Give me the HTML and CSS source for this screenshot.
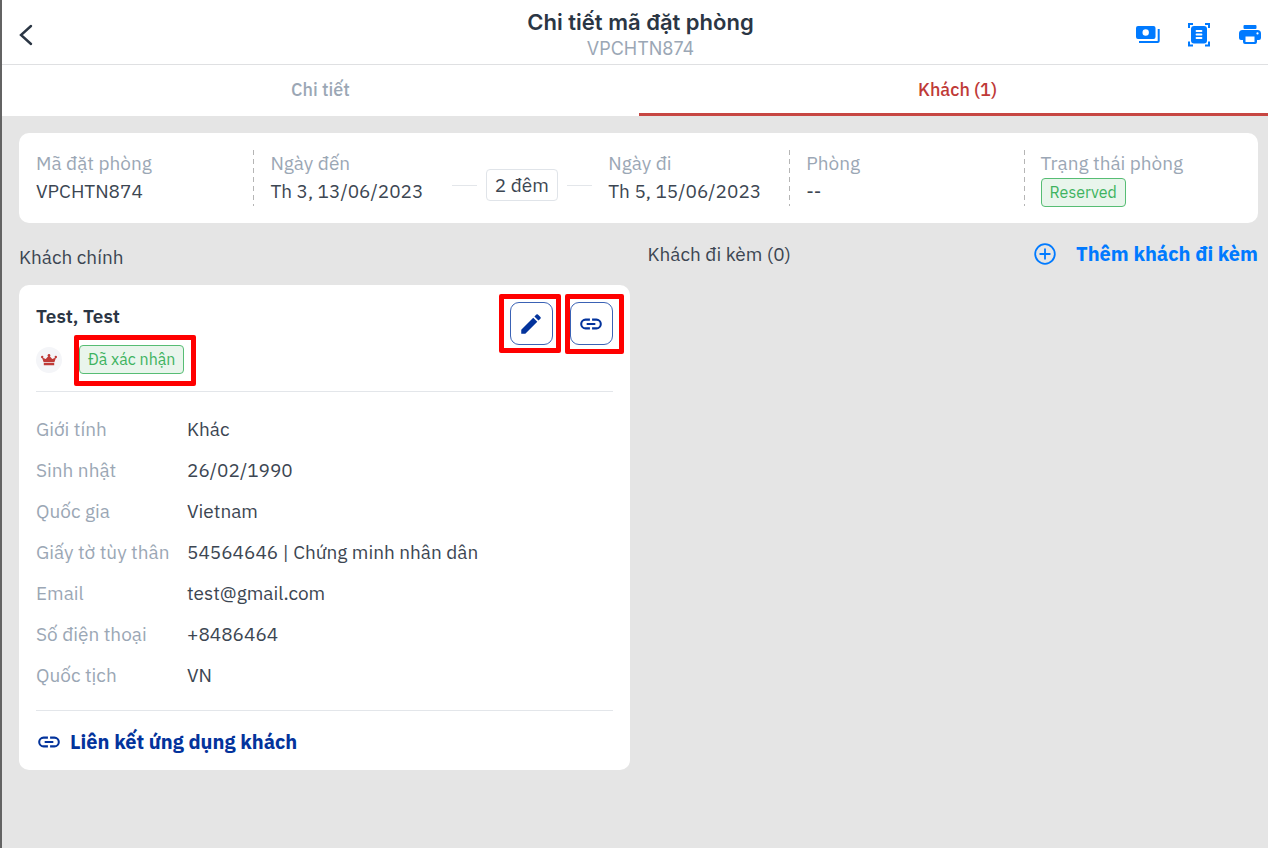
FILE: index.html
```
<!DOCTYPE html>
<html lang="vi">
<head>
    <meta charset="UTF-8">
    <meta name="viewport" content="width=device-width, initial-scale=1.0">
    <title>Chi tiết mã đặt phòng</title>
    <link rel="stylesheet" href="styles.css">
</head>
<body>
    <!-- Header -->
    <header class="header">
        <button class="icon-button back" aria-label="Quay lại">
            <svg width="14" height="22" viewBox="0 0 14 22"><path d="M12 2L2 11l10 9" fill="none" stroke="currentColor" stroke-width="2.4" stroke-linecap="round"/></svg>
        </button>
        <div class="title">
            <h1>Chi tiết mã đặt phòng</h1>
            <p>VPCHTN874</p>
        </div>
        <div class="header-actions">
            <button class="icon-button" aria-label="Thanh toán">
                <svg width="24" height="24" viewBox="0 0 24 24" fill="currentColor">
                    <path fill-rule="evenodd" d="M2 3h15.500a2 2 0 0 1 2 2v9a2 2 0 0 1-2 2H2a2 2 0 0 1-2-2V5a2 2 0 0 1 2-2zM9.700 6.300a3.200 3.200 0 1 0 0 6.400a3.200 3.200 0 0 0 0-6.400z"/>
                    <path d="M21.700 6h2v12a2 2 0 0 1-2 2H3v-1.900h18.200a.5.5 0 0 0 .5-.5z"/>
                </svg>
            </button>
            <button class="icon-button" aria-label="Quét giấy tờ">
                <svg width="24" height="24" viewBox="0 0 24 24" fill="none">
                    <path d="M2 5V1h4M18 1h4v4M22 18.500v4h-4M6 22.500H2v-4" stroke="currentColor" stroke-width="2"/>
                    <rect x="4" y="3" width="16" height="17.500" rx="3" fill="currentColor"/>
                    <path d="M9.500 8h5M9.500 11.500h5M9.500 15h5" stroke="#fff" stroke-width="1.800" stroke-linecap="round"/>
                </svg>
            </button>
            <button class="icon-button" aria-label="In">
                <svg width="24" height="24" viewBox="0 0 24 24" fill="currentColor">
                    <rect x="5.500" y="2" width="13" height="4" rx="1"/>
                    <path fill-rule="evenodd" d="M4.500 7h15a3.500 3.500 0 0 1 3.500 3.500V15a2 2 0 0 1-2 2h-2v2a2 2 0 0 1-2 2H7a2 2 0 0 1-2-2v-2H3a2 2 0 0 1-2-2v-4.500A3.500 3.500 0 0 1 4.500 7zM7.500 13.500V19h9v-5.500zM19.500 9.300a1.100 1.100 0 1 0 0 2.200a1.100 1.100 0 0 0 0-2.200z"/>
                </svg>
            </button>
        </div>
    </header>

    <nav class="tabs">
        <a href="#detail">Chi tiết</a>
        <a href="#guests" class="active">Khách (1)</a>
    </nav>

    <main class="content">
        <!-- Booking summary -->
        <section class="card summary">
            <div class="cell">
                <div class="label">Mã đặt phòng</div>
                <div>VPCHTN874</div>
            </div>
            <div class="cell dates">
                <div>
                    <div class="label">Ngày đến</div>
                    <div>Th 3, 13/06/2023</div>
                </div>
                <div class="nights"><span>2 đêm</span></div>
                <div>
                    <div class="label">Ngày đi</div>
                    <div>Th 5, 15/06/2023</div>
                </div>
            </div>
            <div class="cell">
                <div class="label">Phòng</div>
                <div>--</div>
            </div>
            <div class="cell">
                <div class="label">Trạng thái phòng</div>
                <span class="badge">Reserved</span>
            </div>
        </section>

        <div class="columns">
            <!-- Main guest -->
            <section>
                <h2 class="main-heading">Khách chính</h2>
                <div class="card guest">
                    <div class="guest-header">
                        <div>
                            <h3>Test, Test</h3>
                            <div class="guest-status">
                                <span class="crown">
                                    <svg width="16" height="12" viewBox="0 0 16 12" fill="currentColor">
                                        <path d="M2.600 8.200L1 3.500L4.800 5L8 1.200L11.200 5L15 3.500l-1.600 4.700zM2.800 9h10.400v2.200H2.800z"/>
                                        <circle cx="1.200" cy="3" r="1.200"/><circle cx="8" cy="1.300" r="1.300"/><circle cx="14.800" cy="3" r="1.200"/>
                                    </svg>
                                </span>
                                <span class="marked marked-status"><span class="badge">Đã xác nhận</span></span>
                            </div>
                        </div>
                        <div class="guest-actions">
                            <div class="marked marked-edit">
                                <button class="square-button" aria-label="Chỉnh sửa">
                                    <svg width="26" height="26" viewBox="0 0 24 24" fill="currentColor"><path d="M3 17.250V21h3.750L17.810 9.940l-3.750-3.750L3 17.250zM20.710 7.040a1 1 0 0 0 0-1.410l-2.340-2.340a1 1 0 0 0-1.410 0l-1.830 1.830l3.750 3.750l1.830-1.830z"/></svg>
                                </button>
                            </div>
                            <div class="marked marked-link">
                                <button class="square-button" aria-label="Liên kết">
                                    <svg width="26" height="26" viewBox="0 0 24 24" fill="currentColor"><path d="M3.900 12a3.100 3.100 0 0 1 3.100-3.100h4V7H7a5 5 0 0 0 0 10h4v-1.900H7A3.100 3.100 0 0 1 3.900 12zM8 13h8v-2H8v2zM17 7h-4v1.900h4a3.100 3.100 0 0 1 0 6.200h-4V17h4a5 5 0 0 0 0-10z"/></svg>
                                </button>
                            </div>
                        </div>
                    </div>
                    <dl class="info">
                        <dt>Giới tính</dt><dd>Khác</dd>
                        <dt>Sinh nhật</dt><dd>26/02/1990</dd>
                        <dt>Quốc gia</dt><dd>Vietnam</dd>
                        <dt>Giấy tờ tùy thân</dt><dd>54564646 | Chứng minh nhân dân</dd>
                        <dt>Email</dt><dd>test@gmail.com</dd>
                        <dt>Số điện thoại</dt><dd>+8486464</dd>
                        <dt>Quốc tịch</dt><dd>VN</dd>
                    </dl>
                    <a href="#link" class="app-link">
                        <svg width="26" height="26" viewBox="0 0 24 24" fill="currentColor"><path d="M3.900 12a3.100 3.100 0 0 1 3.100-3.100h4V7H7a5 5 0 0 0 0 10h4v-1.900H7A3.100 3.100 0 0 1 3.900 12zM8 13h8v-2H8v2zM17 7h-4v1.900h4a3.100 3.100 0 0 1 0 6.200h-4V17h4a5 5 0 0 0 0-10z"/></svg>
                        Liên kết ứng dụng khách
                    </a>
                </div>
            </section>

            <!-- Accompanying guests -->
            <section class="others">
                <h2>Khách đi kèm (0)</h2>
                <button class="add-guest">
                    <svg width="22" height="22" viewBox="0 0 22 22" fill="none" stroke="currentColor" stroke-width="1.800" stroke-linecap="round"><circle cx="11" cy="11" r="9.800"/><path d="M11 6.200v9.600M6.200 11h9.600"/></svg>
                    Thêm khách đi kèm
                </button>
            </section>
        </div>
    </main>
</body>
</html>
```
FILE: styles.css
```
* {
    box-sizing: border-box;
}

body {
    font-family: "IBM Plex Sans", "Noto Sans", sans-serif;
    font-size: 19px;
    line-height: 28px;
    color: #3c4652;
    background-color: #e5e5e5;
    margin: 0;
    min-height: 100vh;
    border-left: 2px solid #636363;
    overflow-x: hidden;
}

h1, h2, h3, p, dl, dd {
    margin: 0;
}

h2 {
    font-size: 19px;
    font-weight: 400;
}

button {
    font-family: inherit;
    background: none;
    border: none;
    padding: 0;
    cursor: pointer;
}

a {
    text-decoration: none;
}

svg {
    display: block;
    flex-shrink: 0;
}

.header {
    display: grid;
    grid-template-columns: 1fr auto 1fr;
    align-items: center;
    background: #ffffff;
    padding: 6px 6px 0 17px;
    height: 65px;
    border-bottom: 1px solid #dfe0e2;
}

.title {
    font-family: Inter, sans-serif;
    text-align: center;
}

.title h1 {
    font-size: 22px;
    font-weight: 600;
    color: #2b3644;
}

.title p {
    font-size: 18px;
    line-height: 26px;
    color: #9ba7b5;
}

.icon-button {
    color: #007aff;
}

.back {
    color: #2b3644;
    justify-self: start;
}

.header-actions {
    display: flex;
    justify-content: flex-end;
    gap: 27px;
}

.tabs {
    display: grid;
    grid-template-columns: 1fr 1fr;
    background: #ffffff;
    margin-right: -8px;
}

.tabs a {
    text-align: center;
    font-size: 18px;
    font-weight: 500;
    color: #9ba7b5;
    padding: 11px 0 9px;
    border-bottom: 3px solid #ffffff;
}

.tabs .active {
    color: #bf3a37;
    border-color: #c74642;
}

.content {
    padding: 17px 10px 17px 17px;
}

.card {
    background: #ffffff;
    border-radius: 10px;
}

.label {
    color: #9ba7b5;
}

.summary {
    display: grid;
    grid-template-columns: 7fr 16fr 7fr 7fr;
    padding: 17px 0;
    line-height: 26px;
}

.cell {
    height: 56px;
    padding-left: 17px;
    white-space: nowrap;
}

.cell + .cell {
    background: repeating-linear-gradient(#b5b5b5 0 5px, transparent 5px 9px) left / 1px 100% no-repeat;
}

.cell .label {
    margin-bottom: 2px;
}

.dates {
    display: flex;
    justify-content: space-between;
    padding-right: 28px;
}

.nights {
    display: flex;
    align-items: center;
    gap: 9px;
    margin-left: 12px;
    padding-top: 14px;
}

.nights::before, .nights::after {
    content: "";
    width: 25px;
    height: 1px;
    background: #e3e6ea;
}

.nights span {
    border: 1px solid #e0e4e9;
    border-radius: 4px;
    padding: 2px 8px;
}

.badge {
    display: block;
    width: max-content;
    font-size: 16px;
    line-height: 27px;
    color: #3eb35f;
    background: #e9f5ec;
    border: 1px solid #57bd74;
    border-radius: 4px;
    padding: 0 8px;
}

.columns {
    display: grid;
    grid-template-columns: 1fr 1fr;
    align-items: start;
    gap: 18px;
}

.main-heading {
    padding: 20px 0 14px;
}

.guest {
    padding: 17px 17px 14px;
}

.guest-header {
    display: flex;
    justify-content: space-between;
    padding-bottom: 17px;
    border-bottom: 1px solid #e3e6ea;
}

.guest-header h3 {
    font-size: 19px;
    font-weight: 600;
    color: #2b3644;
}

.guest-status {
    display: flex;
    align-items: center;
    gap: 17px;
    margin-top: 15px;
}

.crown {
    display: flex;
    align-items: center;
    justify-content: center;
    width: 26px;
    height: 26px;
    border-radius: 50%;
    background: #f4f5f8;
    color: #bf3a37;
}

.guest-actions {
    display: flex;
    align-items: flex-start;
    gap: 17px;
}

.square-button {
    display: flex;
    align-items: center;
    justify-content: center;
    width: 43px;
    height: 43px;
    color: #03339c;
    border: 1px solid #3a62b5;
    border-radius: 9px;
}

/* Red highlight frames */
.marked {
    position: relative;
}

.marked::after {
    content: "";
    position: absolute;
    border: 5px solid #ff0000;
    border-radius: 2px;
    pointer-events: none;
}

.marked-status::after {
    inset: -10px -12px -12px -5px;
}

.marked-edit::after {
    inset: -8px -8px -8px -11px;
}

.marked-link::after {
    inset: -8px -11px -9px -5px;
}

.info {
    display: grid;
    grid-template-columns: 151px 1fr;
    line-height: 41px;
    padding: 17px 0 14px;
    border-bottom: 1px solid #e3e6ea;
}

.info dt {
    color: #9ba7b5;
    white-space: nowrap;
}

.app-link {
    display: flex;
    align-items: center;
    gap: 8px;
    padding-top: 17px;
    font-size: 20px;
    font-weight: 700;
    color: #03339c;
}

.others {
    display: flex;
    justify-content: space-between;
    align-items: center;
    padding-top: 17px;
}

.add-guest {
    display: flex;
    align-items: center;
    gap: 20px;
    font-size: 20px;
    font-weight: 700;
    line-height: 28px;
    color: #007aff;
}
```
